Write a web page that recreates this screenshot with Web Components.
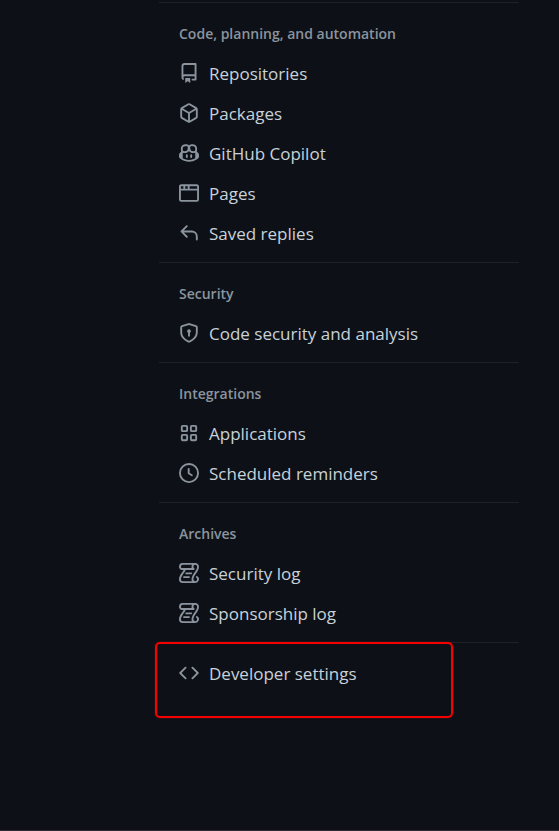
<!DOCTYPE html>
<html lang="en">
<head>
<meta charset="utf-8">
<meta name="viewport" content="width=device-width, initial-scale=1">
<title>Settings</title>
<style>
  html { background: #0d1117; }
  body { margin: 0; font-family: "Open Sans", "Noto Sans", sans-serif; }
</style>
</head>
<body>
<settings-page>
  <settings-nav>
    <nav-section heading="Code, planning, and automation">
      <nav-item icon="repo">Repositories</nav-item>
      <nav-item icon="package">Packages</nav-item>
      <nav-item icon="copilot">GitHub Copilot</nav-item>
      <nav-item icon="browser">Pages</nav-item>
      <nav-item icon="reply">Saved replies</nav-item>
    </nav-section>
    <nav-section heading="Security">
      <nav-item icon="shield">Code security and analysis</nav-item>
    </nav-section>
    <nav-section heading="Integrations">
      <nav-item icon="apps">Applications</nav-item>
      <nav-item icon="clock">Scheduled reminders</nav-item>
    </nav-section>
    <nav-section heading="Archives">
      <nav-item icon="log">Security log</nav-item>
      <nav-item icon="log">Sponsorship log</nav-item>
    </nav-section>
    <nav-section marked>
      <nav-item icon="code">Developer settings</nav-item>
    </nav-section>
  </settings-nav>
</settings-page>
<script>
const icons = {
  repo: '<path d="M2 2.5A2.5 2.5 0 014.5 0h8.75a.75.75 0 01.75.75v12.5a.75.75 0 01-.75.75h-2.5a.75.75 0 110-1.5h1.75v-2h-8a1 1 0 00-.714 1.7.75.75 0 01-1.072 1.05A2.495 2.495 0 012 11.5v-9zm10.5-1V9h-8c-.356 0-.694.074-1 .208V2.5a1 1 0 011-1h8zM5 12.25v3.25a.25.25 0 00.4.2l1.45-1.087a.25.25 0 01.3 0L8.6 15.7a.25.25 0 00.4-.2v-3.25a.25.25 0 00-.25-.25h-3.5a.25.25 0 00-.25.25z"/>',
  package: '<path d="M8.878.392a1.75 1.75 0 00-1.756 0l-5.25 3.045A1.75 1.75 0 001 4.951v6.098c0 .624.332 1.2.872 1.514l5.25 3.045a1.75 1.75 0 001.756 0l5.25-3.045c.54-.313.872-.89.872-1.514V4.951c0-.624-.332-1.2-.872-1.514L8.878.392zM7.875 1.69a.25.25 0 01.25 0l4.63 2.685L8 7.133 3.245 4.375l4.63-2.685zM2.5 5.677v5.372c0 .09.047.171.125.216l4.625 2.683V8.432L2.5 5.677zm6.25 8.271l4.625-2.683a.25.25 0 00.125-.216V5.677L8.75 8.432v5.516z"/>',
  copilot: '<path d="M7.998 15.035c-4.562 0-7.873-2.914-7.998-3.749V9.338c.085-.628.677-1.686 1.588-2.065.013-.07.024-.143.036-.218.029-.183.06-.384.126-.612-.201-.508-.254-1.084-.254-1.656 0-.87.128-1.769.693-2.484.579-.733 1.494-1.124 2.724-1.261 1.206-.134 2.262.034 2.944.765.05.053.096.108.139.165.044-.057.094-.112.143-.165.682-.731 1.738-.899 2.944-.765 1.23.137 2.145.528 2.724 1.261.566.715.693 1.614.693 2.484 0 .572-.053 1.148-.254 1.656.066.228.098.429.126.612.012.076.024.148.037.218.924.385 1.522 1.471 1.591 2.095v1.872c0 .766-3.351 3.795-8.002 3.795Zm0-1.485c2.28 0 4.584-1.11 5.002-1.433V7.862l-.023-.116c-.49.21-1.075.291-1.727.291-1.146 0-2.059-.327-2.71-.991A3.222 3.222 0 0 1 8 6.303a3.24 3.24 0 0 1-.544.743c-.65.664-1.563.991-2.71.991-.652 0-1.236-.081-1.727-.291l-.023.116v4.255c.419.323 2.722 1.433 5.002 1.433ZM6.762 2.83c-.193-.206-.637-.413-1.682-.297-1.019.113-1.479.404-1.713.7-.247.312-.369.789-.369 1.554 0 .793.129 1.171.308 1.371.162.181.519.379 1.442.379.853 0 1.339-.235 1.638-.54.315-.322.527-.827.617-1.553.117-.935-.037-1.395-.241-1.614Zm4.155-.297c-1.044-.116-1.488.091-1.681.297-.204.219-.359.679-.242 1.614.091.726.303 1.231.618 1.553.299.305.784.54 1.638.54.922 0 1.28-.198 1.442-.379.179-.2.308-.578.308-1.371 0-.765-.123-1.242-.37-1.554-.233-.296-.693-.587-1.713-.7ZM6.25 9.037a.75.75 0 0 1 .75.75v1.501a.75.75 0 0 1-1.5 0V9.787a.75.75 0 0 1 .75-.75Zm4.25.75v1.501a.75.75 0 0 1-1.5 0V9.787a.75.75 0 0 1 1.5 0Z"/>',
  browser: '<path d="M0 2.75C0 1.784.784 1 1.75 1h12.5c.966 0 1.75.784 1.75 1.75v10.5A1.75 1.75 0 0 1 14.25 15H1.75A1.75 1.75 0 0 1 0 13.25ZM14.5 6h-13v7.25c0 .138.112.25.25.25h12.5a.25.25 0 0 0 .25-.25Zm-6-3.5v2h6V2.75a.25.25 0 0 0-.25-.25ZM5 2.5v2h2v-2Zm-3.25 0a.25.25 0 0 0-.25.25V4.5h2v-2Z"/>',
  reply: '<path d="M6.78 1.97a.75.75 0 0 1 0 1.06L3.81 6h6.44A4.75 4.75 0 0 1 15 10.75v2.5a.75.75 0 0 1-1.5 0v-2.5a3.25 3.25 0 0 0-3.25-3.25H3.81l2.97 2.97a.749.749 0 0 1-.326 1.275.749.749 0 0 1-.734-.215L1.47 7.28a.75.75 0 0 1 0-1.06l4.25-4.25a.75.75 0 0 1 1.06 0Z"/>',
  shield: '<path d="M8.533.133l5.25 1.68A1.75 1.75 0 0 1 15 3.48V7c0 1.566-.32 3.182-1.303 4.682-.983 1.498-2.585 2.813-5.032 3.855a1.697 1.697 0 0 1-1.33 0c-2.447-1.042-4.049-2.357-5.032-3.855C1.32 10.182 1 8.566 1 7V3.48a1.75 1.75 0 0 1 1.217-1.667l5.25-1.68a1.748 1.748 0 0 1 1.066 0Zm-.61 1.429.001.001-5.25 1.68a.251.251 0 0 0-.174.237V7c0 1.36.275 2.666 1.057 3.859.784 1.194 2.121 2.342 4.366 3.298a.196.196 0 0 0 .154 0c2.245-.957 3.582-2.103 4.366-3.297C13.225 9.666 13.5 8.358 13.5 7V3.48a.25.25 0 0 0-.174-.238l-5.25-1.68a.25.25 0 0 0-.153 0ZM9.5 6.5c0 .536-.286 1.032-.75 1.3v2.45a.75.75 0 0 1-1.5 0V7.8A1.5 1.5 0 1 1 9.5 6.5Z"/>',
  apps: '<g fill="none" stroke="currentColor" stroke-width="1.5"><rect x="2.25" y="2.25" width="4.25" height="4.25" rx=".75"/><rect x="9.5" y="2.25" width="4.25" height="4.25" rx=".75"/><rect x="2.25" y="9.5" width="4.25" height="4.25" rx=".75"/><rect x="9.5" y="9.5" width="4.25" height="4.25" rx=".75"/></g>',
  clock: '<g fill="none" stroke="currentColor" stroke-width="1.5" stroke-linecap="round" stroke-linejoin="round"><circle cx="8" cy="8" r="7.25"/><path d="M7.75 4.75v3.5l2.5 1.5"/></g>',
  log: '<path d="M5 8.25a.75.75 0 0 1 .75-.75h4a.75.75 0 0 1 0 1.5h-4A.75.75 0 0 1 5 8.25ZM4 10.5A.75.75 0 0 0 4 12h4a.75.75 0 0 0 0-1.5H4Z"/><path d="M13-.005c1.654 0 3 1.328 3 3 0 .982-.338 1.933-.783 2.818-.443.879-1.028 1.758-1.582 2.588l-.011.017c-.568.853-1.104 1.659-1.501 2.446-.398.789-.623 1.494-.623 2.136a1.5 1.5 0 1 0 2.333-1.248.75.75 0 0 1 .834-1.246A3 3 0 0 1 13 16H3a3 3 0 0 1-3-3c0-1.582.891-3.135 1.777-4.506.209-.322.418-.637.623-.946.473-.709.923-1.386 1.287-2.048H2.51c-.576 0-1.381-.133-1.907-.783A2.68 2.68 0 0 1 0 2.995a3 3 0 0 1 3-3Zm0 1.5a1.5 1.5 0 0 0-1.5 1.5c0 .476.223.834.667 1.132A.75.75 0 0 1 11.75 5.5H5.368c-.467 1.003-1.141 2.015-1.773 2.963-.192.289-.381.571-.558.845C2.13 10.711 1.5 11.916 1.5 13A1.5 1.5 0 0 0 3 14.5h7.401A2.989 2.989 0 0 1 10 13c0-.979.338-1.928.784-2.812.441-.874 1.023-1.748 1.575-2.576l.017-.026c.568-.853 1.103-1.658 1.501-2.448.398-.79.623-1.497.623-2.143 0-.838-.669-1.5-1.5-1.5Zm-10 0a1.5 1.5 0 0 0-1.5 1.5c0 .321.1.569.27.778.097.12.325.227.74.227h7.674A2.737 2.737 0 0 1 10 2.995c0-.546.146-1.059.401-1.5Z"/>',
  code: '<path d="M4.72 3.22a.75.75 0 011.06 1.06L2.06 8l3.72 3.72a.75.75 0 11-1.06 1.06L.47 8.53a.75.75 0 010-1.06l4.25-4.25zm6.56 0a.75.75 0 10-1.06 1.06L13.94 8l-3.72 3.72a.75.75 0 101.06 1.06l4.25-4.25a.75.75 0 000-1.06l-4.25-4.25z"/>'
};

customElements.define('settings-page', class extends HTMLElement {
  constructor() {
    super();
    this.attachShadow({ mode: 'open' }).innerHTML = `
      <style>
        :host { display: block; box-sizing: border-box; min-height: 100vh;
          padding: 2px 40px 0 159px; background: #0d1117; border-bottom: 1px solid #2c2b31; }
      </style>
      <main><slot></slot></main>`;
  }
});

customElements.define('settings-nav', class extends HTMLElement {
  constructor() {
    super();
    this.attachShadow({ mode: 'open' }).innerHTML = `
      <style>:host { display: block; }</style>
      <nav aria-label="Settings"><slot></slot></nav>`;
  }
});

customElements.define('nav-section', class extends HTMLElement {
  constructor() {
    super();
    this.attachShadow({ mode: 'open' });
  }
  connectedCallback() {
    const heading = this.getAttribute('heading');
    this.shadowRoot.innerHTML = `
      <style>
        :host { display: block; position: relative; border-top: 1px solid #1d2229; padding-bottom: 9px; }
        h2 { margin: 0; padding: 21px 20px 9px; font-size: 14px; line-height: 20px;
          font-weight: 600; color: #8b949e; }
        .items { display: flex; flex-direction: column; }
        :host([marked]) .items { padding-top: 10px; }
        .mark { position: absolute; box-sizing: border-box; inset: -1px 66px -16px -4px;
          border: 2px solid #f60000; border-radius: 5px; box-shadow: 0 0 1px #f60000; pointer-events: none; }
      </style>
      ${heading ? `<h2>${heading}</h2>` : ''}
      <div class="items" role="list"><slot></slot></div>
      ${this.hasAttribute('marked') ? '<div class="mark"></div>' : ''}`;
  }
});

customElements.define('nav-item', class extends HTMLElement {
  constructor() {
    super();
    this.attachShadow({ mode: 'open' });
  }
  connectedCallback() {
    this.setAttribute('role', 'listitem');
    this.shadowRoot.innerHTML = `
      <style>
        :host { display: block; }
        a { display: flex; align-items: center; gap: 10px; height: 40px; padding: 0 20px;
          font-size: 17px; line-height: 24px; color: #c9d1d9; text-decoration: none; white-space: nowrap; }
        span { padding-top: 2px; }
        svg { flex: none; width: 20px; height: 20px; color: #8b949e; fill: currentColor; fill-rule: evenodd; }
      </style>
      <a href="#"><svg viewBox="0 0 16 16" aria-hidden="true">${icons[this.getAttribute('icon')]}</svg><span><slot></slot></span></a>`;
  }
});
</script>
</body>
</html>
